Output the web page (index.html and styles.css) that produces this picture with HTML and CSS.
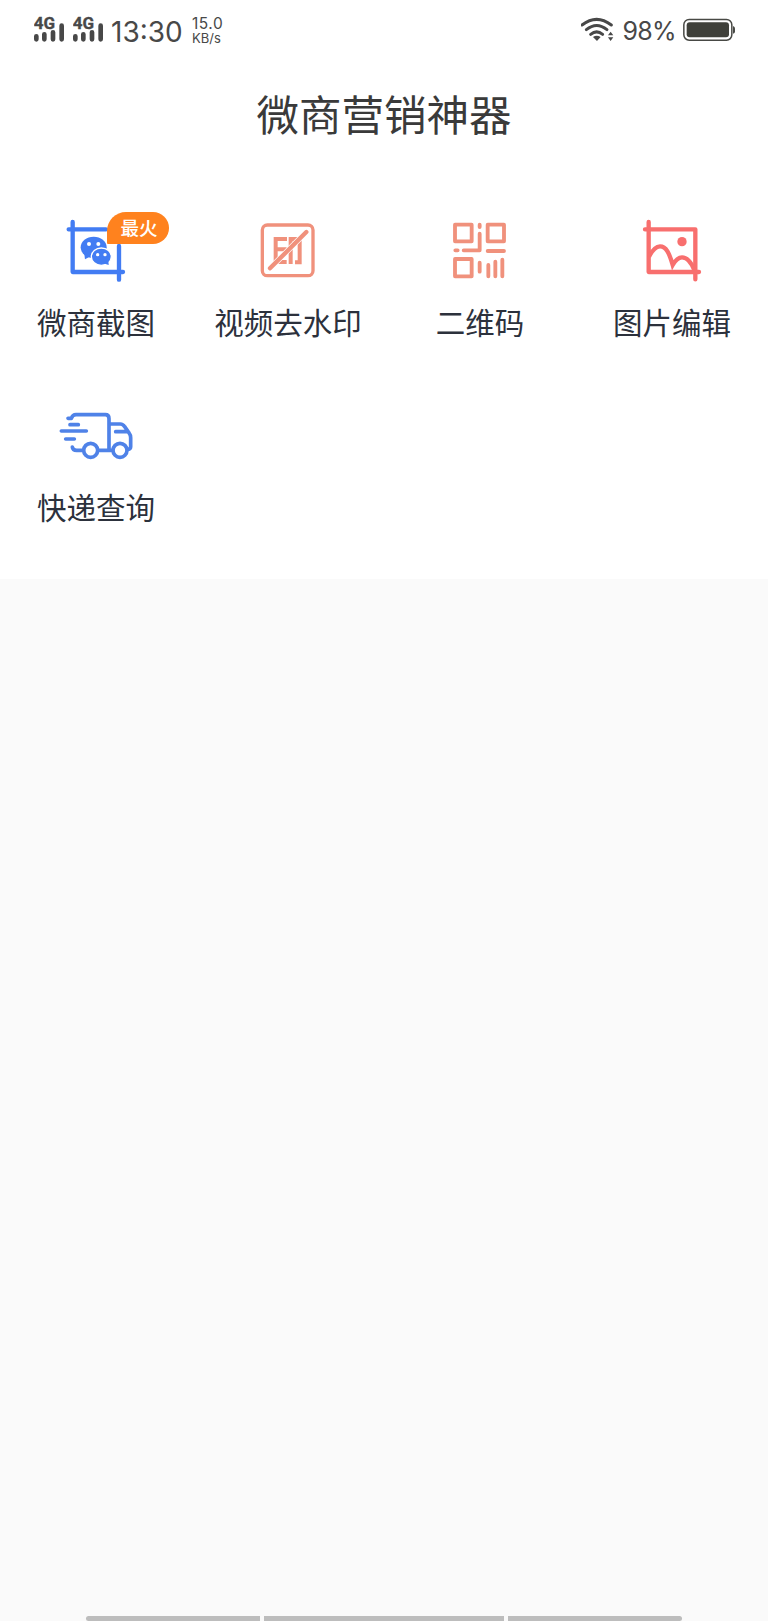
FILE: index.html
```html
<!DOCTYPE html>
<html lang="zh-CN">
<head>
<meta charset="utf-8">
<title>微商营销神器</title>
<link rel="stylesheet" href="styles.css">
</head>
<body>
<div class="screen">
  <header class="status">
    <svg class="signal" viewBox="0 0 210 180"><text x="-1" y="86" textLength="64" lengthAdjust="spacingAndGlyphs">4G</text><path d="M7 109V118M31 103V118M57 97V118M83 77V118"/></svg>
    <svg class="signal" viewBox="0 0 210 180"><text x="-1" y="86" textLength="64" lengthAdjust="spacingAndGlyphs">4G</text><path d="M7 109V118M31 103V118M57 97V118M83 77V118"/></svg>
    <span class="clock">13:30</span>
    <span class="speed"><span class="rate">15.0</span><span class="unit">KB/s</span></span>
    <svg class="wifi" viewBox="60 0 100 180">
      <g fill="none" stroke="#484848" stroke-width="9" stroke-linecap="round"><path d="M63 75Q107 41 151 75"/><path d="M76 89Q107 64 138 89"/><path d="M89 103Q107 88 125 103"/></g>
      <path fill="#484848" d="M96 111Q107 103 119 111L108 123ZM141 106L149 95L157 106ZM141 112H157L149 123Z"/>
    </svg>
    <span class="percent">98%</span>
    <svg class="battery" viewBox="366 0 159 180"><rect x="368.500" y="58.500" width="144" height="62" rx="16" fill="none" stroke="#484945" stroke-width="4.500"/><rect x="377" y="67" width="127" height="45" rx="9" fill="#3f403a"/><path fill="#484945" d="M516 78Q522 80 522 85V95Q522 99 516 101Z"/></svg>
  </header>
  <h1 class="title">微商营销神器</h1>
  <main class="tools">
    <a class="tool">
      <svg class="icon blue" viewBox="0 0 576 300"><g transform="translate(60 0)">
        <path stroke-width="13" d="M158 66V216H309M146 88H258M297 138V239"/>
        <ellipse class="fill" cx="221" cy="142" rx="39" ry="32"/><path class="fill" d="M193 162L195 178L212 169Z"/>
        <ellipse class="bubble" cx="244" cy="170" rx="30" ry="26"/><path class="fill" d="M250 190L266 195L265 180Z"/>
        <g class="eyes"><circle cx="207" cy="132" r="6"/><circle cx="235" cy="132" r="6"/><circle cx="233" cy="164" r="5"/><circle cx="255" cy="164" r="5"/></g>
      </g></svg>
      <span class="badge">最火</span>
      <span class="label">微商截图</span>
    </a>
    <a class="tool">
      <svg class="icon coral" viewBox="0 0 576 300"><g transform="translate(24 0)">
        <rect x="187" y="75" width="152" height="152" rx="15" stroke-width="10"/>
        <path class="square" stroke-width="12" d="M261 117H227V186H260M227 148H260M272 192V117H299V187H285"/>
        <path class="gap" stroke-width="17" d="M210 205L319 96"/><path stroke-width="13" d="M210 205L319 96"/>
      </g></svg>
      <span class="label">视频去水印</span>
    </a>
    <a class="tool">
      <svg class="icon coral" viewBox="0 0 576 300"><g transform="translate(107 0)" stroke-width="11.500">
        <path d="M106 74H156V124H106ZM204 74H253V124H204ZM106 177H156V229H106ZM180 74V81M180 101V151H132M107 151H114M204 153H253M180 188V215M206 195V229M227 185V229M248 179V229"/>
      </g></svg>
      <span class="label">二维码</span>
    </a>
    <a class="tool">
      <svg class="icon red" viewBox="0 0 576 300"><g transform="translate(72 0)" stroke-width="13">
        <path d="M146 66V216H297M135 88H286V238"/>
        <path class="square" d="M147 170Q163 139 180 139C199 139 208 160 218 195Q231 172 246 172Q268 172 284 212"/>
        <circle class="fill" cx="246" cy="125" r="14"/>
      </g></svg>
      <span class="label">图片编辑</span>
    </a>
    <a class="tool">
      <svg class="icon blue truck" viewBox="0 0 576 300"><g transform="translate(60 15)" stroke-width="11">
        <path d="M144 85H154Q158 74 168 74H256Q267 74 267 86V181M150 104H175M124 123H199M137 147H163M157 171Q158 181 170 181H190M234 181H278M267 102H301Q309 102 314 110L328 130Q332 135 332 143V170Q332 177 324 178M287 125H323"/>
        <circle cx="212" cy="181" r="21"/><circle cx="300" cy="181" r="21"/>
      </g></svg>
      <span class="label">快递查询</span>
    </a>
  </main>
  <nav class="navbar"><i class="side left"></i><i class="center"></i><i class="side right"></i></nav>
</div>
</body>
</html>
```
FILE: styles.css
```css
* { box-sizing: border-box; }
body { margin: 0; background: #fafafa; font-family: "Noto Sans CJK SC", sans-serif; }
.screen { display: flex; flex-direction: column; height: 1621px; overflow: hidden; }
.status { display: flex; height: 60px; padding-left: 34px; background: #fff; color: #484848; font-family: Inter, sans-serif; flex: none; }
.signal { width: 70px; height: 60px; margin-right: -31.500px; flex: none; }
.signal text { font: 700 51px Roboto, sans-serif; fill: #484848; stroke: #484848; stroke-width: 1; }
.signal path { stroke: #484848; stroke-width: 14; stroke-linecap: round; }
.clock { width: 81px; margin-left: 0; font-size: 28px; line-height: 65px; letter-spacing: 0; white-space: nowrap; }
.speed { display: flex; flex-direction: column; padding-top: 16px; width: 60px; }
.rate { font-size: 15.500px; line-height: 16px; letter-spacing: 0.500px; }
.unit { font-size: 13px; line-height: 12px; }
.wifi { width: 33.300px; height: 60px; margin-left: auto; }
.percent { width: 52px; margin: 0 8px; font-size: 25px; line-height: 62px; letter-spacing: -0.700px; white-space: nowrap; }
.battery { width: 53px; height: 60px; margin-right: 32.500px; }
.title { height: 140px; margin: 0; background: #fff; color: #3a3a3a; font-size: 42.500px; font-weight: 400; line-height: 106px; text-align: center; flex: none; }
.tools { display: grid; grid-template-columns: repeat(4, 1fr); grid-template-rows: 185px 194px; height: 379px; background: #fff; flex: none; }
.tool { position: relative; display: flex; flex-direction: column; }
.icon { display: block; width: 192px; height: 100px; fill: none; stroke: currentColor; stroke-linecap: round; stroke-linejoin: round; }
.blue { color: #427cf3; }
.truck { color: #4f82e8; }
.coral { color: #f0917c; }
.red { color: #f86f6e; }
.fill { fill: currentColor; stroke: none; }
.bubble { fill: currentColor; stroke: #fff; stroke-width: 4; }
.eyes { fill: #fff; stroke: none; }
.square { stroke-linecap: butt; stroke-linejoin: miter; }
.gap { stroke: #fff; stroke-linecap: butt; }
.badge { position: absolute; left: 107px; top: 12px; width: 62px; height: 32px; padding-left: 13.500px; border-radius: 19px 16px 16px 1px; background: #ff821e; color: #fff; font-size: 18.500px; font-weight: 500; line-height: 30px; }
.label { color: #2c313c; font-size: 29.500px; line-height: 42px; text-align: center; white-space: nowrap; }
.navbar { display: flex; gap: 4px; justify-content: center; margin-top: auto; height: 5px; }
.navbar i { background: #bdbdbd; }
.side { width: 174px; }
.center { width: 240px; }
.left { border-radius: 3px 0 0 3px; }
.right { border-radius: 0 3px 3px 0; }
```
